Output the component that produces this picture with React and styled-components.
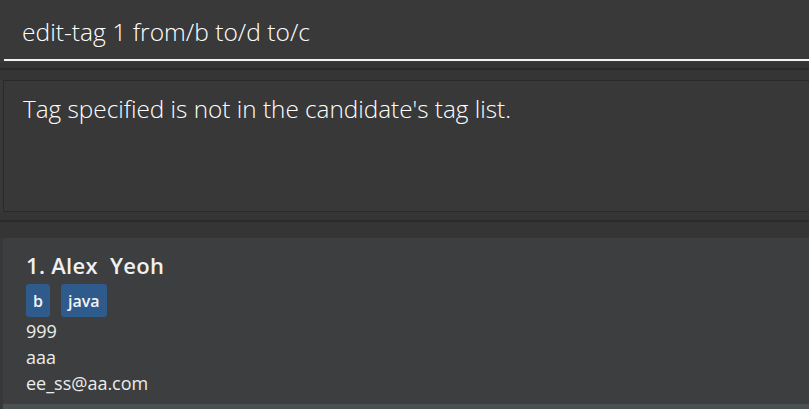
import React from 'react';
import styled, {createGlobalStyle} from "styled-components";

const GlobalStyle = createGlobalStyle`
    html, body {
      margin: 0;
      padding: 0;
      background-color: #383838;
      font-family: "Open Sans", "Noto Sans", sans-serif;
    }
`;

const persons = [
    {name: "Alex  Yeoh", tags: ["b", "java"], phone: "999", address: "aaa", email: "ee_ss@aa.com"},
];

const App = () => {
    return (
        <Window>
            <GlobalStyle/>
            <CommandBox>
                <CommandInput>edit-tag 1 from/b to/d to/c</CommandInput>
            </CommandBox>
            <Splitter/>
            <ResultBox>
                <ResultText>Tag specified is not in the candidate's tag list.</ResultText>
            </ResultBox>
            <Splitter low/>
            <PersonList>
                {persons.map((p, i) => (
                    <Card key={p.name} odd={i % 2 === 0}>
                        <Name>{i + 1}. {p.name}</Name>
                        <Tags>
                            {p.tags.map(t => <Tag key={t}>{t}</Tag>)}
                        </Tags>
                        <Detail>{p.phone}</Detail>
                        <Detail>{p.address}</Detail>
                        <Detail>{p.email}</Detail>
                    </Card>
                ))}
                <Card odd={false}/>
            </PersonList>
        </Window>
    );
};

const Window = styled.div`
    width: 809px;
    height: 409px;
    overflow: hidden;
    display: flex;
    flex-direction: column;
    background-color: #383838;
    
    & > * {
      flex-shrink: 0;
    }
`;

const CommandBox = styled.div`
    height: 62px;
    padding-left: 4px;
    box-sizing: border-box;
    background-color: #393939;
`;

const CommandInput = styled.div`
    height: 61px;
    box-sizing: border-box;
    border-bottom: 2px solid #f2f2f2;
    padding: 15px 0 0 18px;
    color: #ffffff;
    font-size: 24.6px;
    font-weight: 300;
    line-height: normal;
`;

const Splitter = styled.div`
    height: ${p => p.low ? "26px" : "18px"};
    box-sizing: border-box;
    background-color: #353535;
    background-image: linear-gradient(#2b2b2b, #2b2b2b);
    background-repeat: no-repeat;
    background-size: 100% 2px;
    background-position: 0 ${p => p.low ? "8px" : "6px"};
`;

const ResultBox = styled.div`
    height: 132px;
    margin-left: 3px;
    box-sizing: border-box;
    border: 1px solid #2a2a2a;
    border-right: none;
    background-color: #383838;
    padding: 11px 0 0 19px;
`;

const ResultText = styled.div`
    color: #ffffff;
    font-size: 24.3px;
    font-weight: 300;
    line-height: normal;
`;

const PersonList = styled.div`
    flex: 1 1 auto !important;
    min-height: 0;
    margin-left: 3px;
    display: flex;
    flex-direction: column;
`;

const Card = styled.div`
    height: ${p => p.odd ? "166px" : "auto"};
    flex: ${p => p.odd ? "none" : "1"};
    box-sizing: border-box;
    padding: 14px 0 0 23px;
    background-color: ${p => p.odd ? "#3c3e40" : "#4b5053"};
    display: flex;
    flex-direction: column;
`;

const Name = styled.div`
    color: #f0f0f0;
    font-size: 22px;
    font-weight: 600;
    letter-spacing: 0.3px;
    line-height: 26px;
    white-space: pre;
`;

const Tags = styled.div`
    display: flex;
    gap: 11px;
    margin: 6px 0 1px;
`;

const Tag = styled.span`
    height: 33px;
    box-sizing: border-box;
    padding: 0 7px;
    display: flex;
    align-items: center;
    border-radius: 3px;
    background-color: #2f5a8c;
    color: #f4f4f4;
    font-size: 16px;
    font-weight: 600;
`;

const Detail = styled.div`
    color: #ececec;
    font-size: 18px;
    line-height: 26px;
`;

export default App;
